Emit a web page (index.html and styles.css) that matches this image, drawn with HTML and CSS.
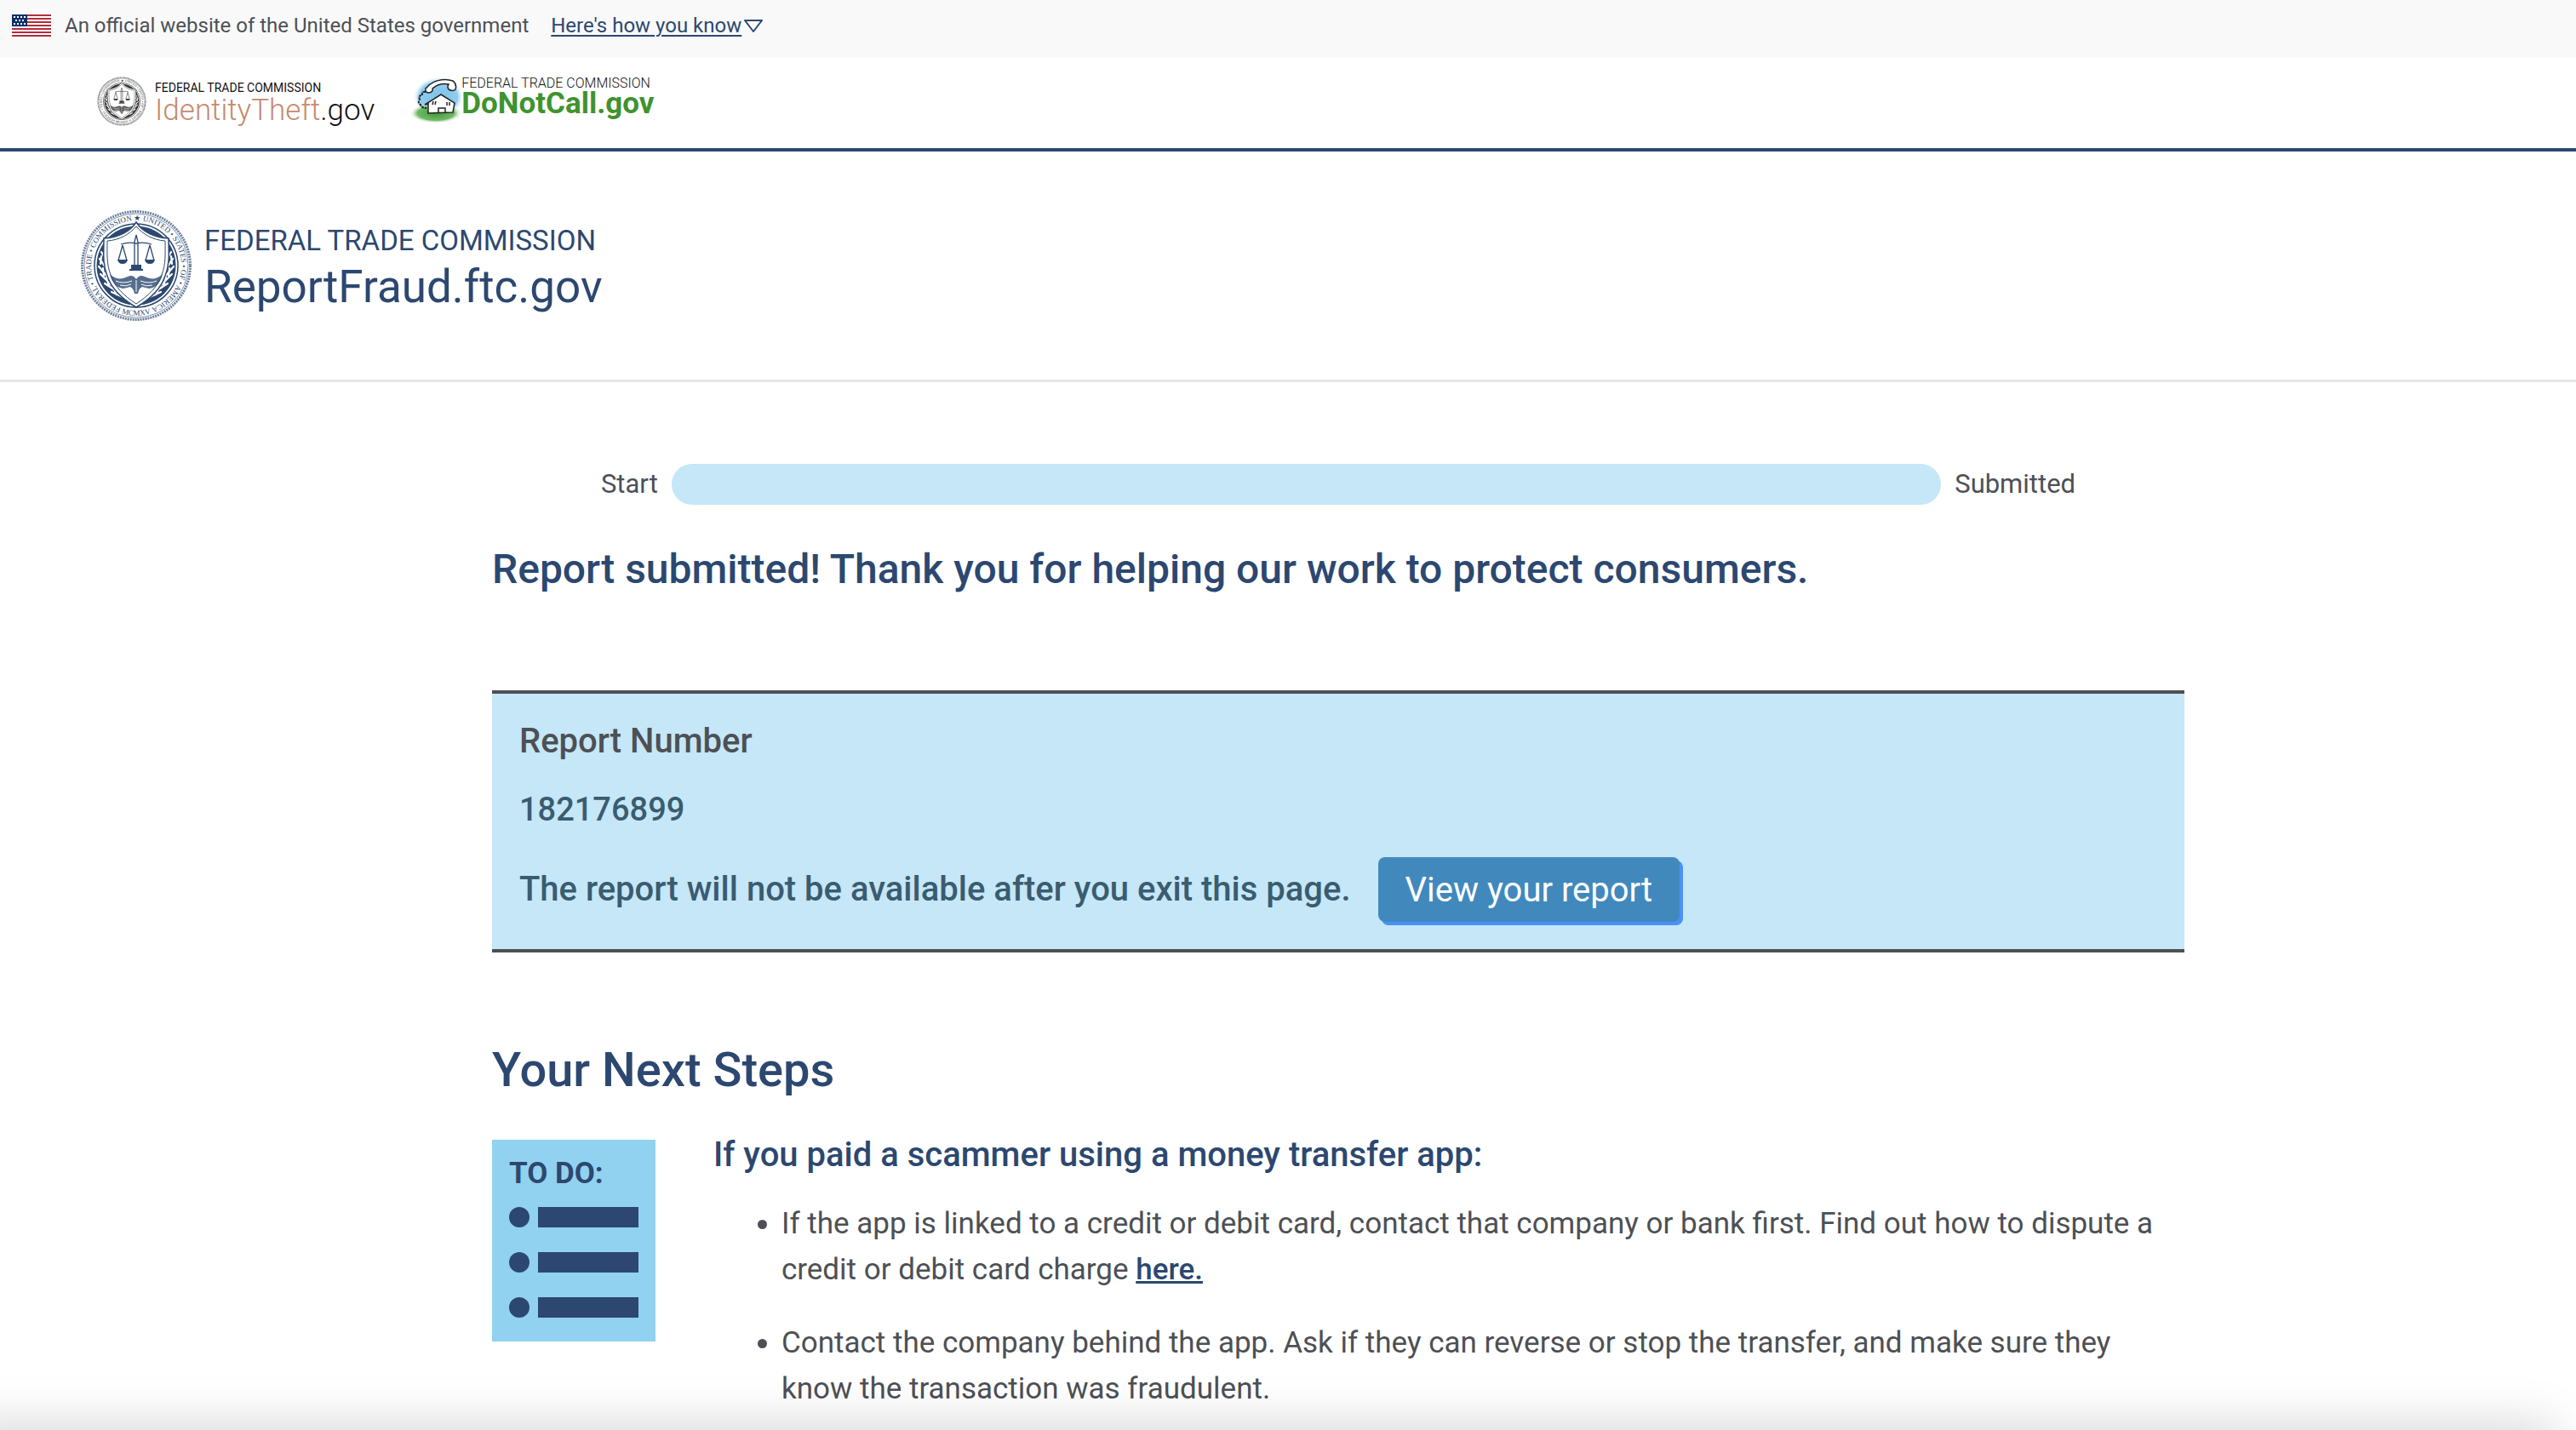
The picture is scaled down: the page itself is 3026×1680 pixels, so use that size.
FILE: index.html
```html
<!DOCTYPE html>
<html lang="en">

<head>
    <meta charset="UTF-8">
    <meta name="viewport" content="width=device-width, initial-scale=1.0">
    <title>ReportFraud.ftc.gov</title>
    <link rel="stylesheet" href="styles.css">
</head>

<body>
    <!-- Shared artwork for the commission seal -->
    <svg class="defs" width="0" height="0" aria-hidden="true">
        <defs>
            <path id="ring" d="M66 119A53 53 0 1 1 66.100 119" fill="none" />
            <path id="ring-bottom" d="M36 116.500A59 59 0 0 0 96 116.500" fill="none" />
            <symbol id="seal" viewBox="0 0 132 132">
                <circle cx="66" cy="66" r="63.500" fill="none" stroke="currentColor" stroke-width="3" stroke-dasharray="2 1" opacity=".7" />
                <circle cx="66" cy="66" r="61" fill="none" stroke="currentColor" stroke-width="1" opacity=".6" />
                <circle cx="66" cy="66" r="49" fill="#fff" stroke="currentColor" stroke-width="1.500" />
                <circle cx="66" cy="66" r="46.500" fill="currentColor" />
                <g fill="none" stroke="#fff" stroke-width="2.200" stroke-linecap="round">
                    <path d="M25 50l7 12M23 58l9 13M22 67l12 14M24 76l13 13M29 87l14 9M37 97l13 6M24 64l1-9M28 78l-1-9M34 90l-3-10M43 100l-5-10" />
                    <path d="M107 50l-7 12M109 58l-9 13M110 67l-12 14M108 76l-13 13M103 87l-14 9M95 97l-13 6M108 64l-1-9M104 78l1-9M98 90l3-10M89 100l5-10" />
                </g>
                <path d="M66 15C59 26 45 33 28 34C28 50 26 63 32 78C37 94 49 105 66 115C83 105 95 94 100 78C106 63 104 50 104 34C87 33 73 26 66 15Z" fill="#fff" stroke="currentColor" stroke-width="1.500" />
                <path d="M66 20C58 29 47 36 32 37C32 52 31 64 36 77C41 91 51 101 66 111C81 101 91 91 96 77C101 64 100 52 100 37C85 36 74 29 66 20Z" fill="none" stroke="currentColor" stroke-width="1" />
                <path d="M64 69V38l2-8 2 8v31M48 41q9-3 18-1q9-2 18 1M50 42l-5 18M50 42l5 18M82 42l-5 18M82 42l5 18" fill="none" stroke="currentColor" stroke-width="1.300" />
                <path d="M44 59h12q-1 5-6 5t-6-5ZM76 59h12q-1 5-6 5t-6-5ZM60 65h12v5h-12Z" fill="currentColor" />
                <path d="M58 70h16v2h-16Z" fill="currentColor" />
                <path d="M35 76Q44 85 56 79Q62 76 66 82Q70 76 76 79Q88 85 97 76Q93 92 81 93L73 91Q69 93 68 99H64Q63 93 59 91L51 93Q39 92 35 76Z" fill="currentColor" opacity=".8" />
                <path d="M42 84q9 4 19 0M47 89q7 2 13-1M90 84q-9 4-19 0M85 89q-7 2-13-1M66 83v14" fill="none" stroke="#fff" stroke-width="1" />
                <text class="ring-text"><textPath href="#ring" startOffset="50%">FEDERAL • TRADE • COMMISSION ★ UNITED • STATES • OF • AMERICA</textPath></text>
                <text class="ring-text"><textPath href="#ring-bottom" startOffset="50%">MCMXV</textPath></text>
            </symbol>
        </defs>
    </svg>

    <!-- Government banner -->
    <div class="banner">
        <svg class="flag" viewBox="0 0 46 26" aria-hidden="true">
            <rect width="46" height="26" fill="#fff" />
            <path d="M0 1h46M0 5h46M0 9h46M0 13h46M0 17h46M0 21h46M0 25h46" stroke="#b22d3a" stroke-width="2" />
            <rect width="18" height="14" fill="#0b3068" />
            <path d="M2 3h15M4 7h12M2 11h15" stroke="#fff" stroke-width="2" stroke-dasharray="2 2" />
        </svg>
        <span class="banner-text">An official website of the United States government</span>
        <a class="banner-link" href="#">Here's how you know</a>
        <svg class="chevron" viewBox="0 0 24 18" aria-hidden="true">
            <path d="M2 3H22L12 16Z" fill="none" stroke="#2c4870" stroke-width="2" stroke-linejoin="round" />
        </svg>
    </div>

    <!-- Sister sites -->
    <nav class="sites">
        <a class="site identity" href="#">
            <svg class="small-seal" viewBox="0 0 132 132" aria-hidden="true"><use href="#seal" /></svg>
            <span class="site-name">
                <span class="site-agency">FEDERAL TRADE COMMISSION</span>
                <span class="site-title"><span class="copper">IdentityTheft</span>.gov</span>
            </span>
        </a>
        <a class="site donotcall" href="#">
            <svg class="house" viewBox="0 0 60 54" aria-hidden="true">
                <defs>
                    <radialGradient id="sky">
                        <stop offset="0" stop-color="#7fc3ea" />
                        <stop offset=".75" stop-color="#8fccf0" />
                        <stop offset="1" stop-color="#fff" stop-opacity="0" />
                    </radialGradient>
                    <radialGradient id="grass">
                        <stop offset="0" stop-color="#3f9a3c" />
                        <stop offset=".7" stop-color="#71b865" />
                        <stop offset="1" stop-color="#fff" stop-opacity="0" />
                    </radialGradient>
                </defs>
                <ellipse cx="33" cy="24" rx="30" ry="24" fill="url(#sky)" />
                <ellipse cx="30" cy="43" rx="31" ry="12" fill="url(#grass)" />
                <path d="M18 14C25 5 39 1 50 5Q55 9 53 15Q50 18 45 15Q43 12 45 9Q34 7 26 14Q27 18 22 19Q17 19 18 14Z" fill="#fff" stroke="#222" stroke-width="1.500" />
                <path d="M18 18q-5-1-4 4q-5 0-3 5q-3 3 1 6q1 4 7 4" fill="none" stroke="#222" stroke-width="2" stroke-dasharray="3 1" />
                <path d="M17 33L36 21L52 31L50 42L21 43L21 32Z" fill="#fff" stroke="#222" stroke-width="1.500" />
                <path d="M27 29l-1 4M30 29l-1 4M43 30v4M46 30v4M33 42v-5h8v5" fill="none" stroke="#222" stroke-width="1.500" />
            </svg>
            <span class="site-name">
                <span class="site-agency">FEDERAL TRADE COMMISSION</span>
                <span class="site-title">DoNotCall.gov</span>
            </span>
        </a>
    </nav>

    <header class="header">
        <a class="brand" href="#">
            <svg class="seal" viewBox="0 0 132 132" aria-hidden="true"><use href="#seal" /></svg>
            <span class="brand-name">
                <span class="brand-agency">FEDERAL TRADE COMMISSION</span>
                <span class="brand-title">ReportFraud.ftc.gov</span>
            </span>
        </a>
    </header>

    <main class="content">
        <div class="progress-row">
            <label for="progress">Start</label>
            <progress id="progress" value="100" max="100"></progress>
            <span>Submitted</span>
        </div>

        <h1>Report submitted! Thank you for helping our work to protect consumers.</h1>

        <section class="report">
            <h2 class="report-label">Report Number</h2>
            <p class="report-number">182176899</p>
            <div class="report-row">
                <p>The report will not be available after you exit this page.</p>
                <button type="button">View your report</button>
            </div>
        </section>

        <h2 class="steps-title">Your Next Steps</h2>
        <section class="steps">
            <div class="todo">
                <div class="todo-title">TO DO:</div>
                <div class="todo-line"></div>
                <div class="todo-line"></div>
                <div class="todo-line"></div>
            </div>
            <div class="advice">
                <h3>If you paid a scammer using a money transfer app:</h3>
                <ul>
                    <li>If the app is linked to a credit or debit card, contact that company or bank first. Find out how to dispute a credit or debit card charge <a href="#">here.</a></li>
                    <li>Contact the company behind the app. Ask if they can reverse or stop the transfer, and make sure they know the transaction was fraudulent.</li>
                </ul>
            </div>
        </section>
    </main>

    <div class="fade"></div>
</body>

</html>
```

FILE: styles.css
```css
* {
    box-sizing: border-box;
}

body {
    margin: 0;
    min-height: 100vh;
    overflow: hidden;
    background: #fff;
    color: #4d5055;
    font-family: Roboto, "Open Sans", sans-serif;
    font-size: 35px;
}

h1,
h2,
h3,
p,
ul {
    margin: 0;
}

a {
    color: #2c4870;
}

.defs {
    display: block;
}

/* Government banner */
.banner {
    display: flex;
    align-items: center;
    height: 68px;
    padding: 0 14px 8px;
    background: #f9f9f9;
    font-size: 24px;
}

.flag {
    width: 46px;
    height: 26px;
    margin-right: 16px;
}

.banner-link {
    margin: 0 2px 0 26px;
    text-decoration-thickness: 2px;
    text-underline-offset: 3px;
}

.chevron {
    width: 24px;
    height: 18px;
}

/* Sister sites */
.sites {
    display: flex;
    gap: 42px;
    height: 110px;
    padding: 22px 114px 0;
    border-bottom: 4px solid #2c4870;
}

.site {
    display: flex;
    align-items: flex-start;
    color: #111;
    text-decoration: none;
}

.site-name,
.brand-name {
    display: flex;
    flex-direction: column;
}

.small-seal {
    width: 58px;
    height: 58px;
    margin-right: 10px;
    color: #333;
}

.identity .site-name {
    padding-top: 4px;
}

.identity .site-agency {
    font-size: 14px;
    line-height: 18px;
}

.identity .site-title {
    font-size: 35px;
    font-weight: 300;
    line-height: 36px;
}

.copper {
    color: #c8896b;
}

.house {
    width: 60px;
    height: 54px;
}

.donotcall .site-agency {
    font-size: 16px;
    font-weight: 300;
    line-height: 16px;
}

.donotcall .site-title {
    color: #3f932f;
    font-size: 35px;
    font-weight: 700;
    line-height: 32px;
}

/* Header */
.header {
    padding: 68px 94px;
    border-bottom: 3px solid #e6e6e6;
}

.brand {
    display: flex;
    align-items: center;
    gap: 14px;
    text-decoration: none;
}

.brand-name {
    padding-top: 6px;
}

.seal {
    width: 132px;
    height: 132px;
    color: #2c4870;
}

.ring-text {
    fill: currentColor;
    font-family: "Liberation Serif", serif;
    font-size: 9px;
    text-anchor: middle;
}

.brand-agency {
    font-size: 33px;
    line-height: 44px;
}

.brand-title {
    font-size: 53px;
    line-height: 64px;
}

/* Report */
.content {
    padding: 96px 15.2% 0 19.1%;
}

.progress-row {
    display: flex;
    align-items: center;
    gap: 16px;
    padding: 0 128px;
    font-size: 31px;
    line-height: 48px;
}

progress {
    flex: 1;
    height: 48px;
    appearance: none;
    border: none;
    border-radius: 24px;
    overflow: hidden;
    background: #c5e7f7;
}

progress::-webkit-progress-bar,
progress::-webkit-progress-value {
    background: #c5e7f7;
}

h1 {
    margin-top: 48px;
    color: #2c4870;
    font-size: 48px;
    font-weight: 500;
    line-height: 56px;
}

.report {
    margin-top: 114px;
    padding: 28px 32px 32px;
    border-top: 4px solid #4d5055;
    border-bottom: 4px solid #4d5055;
    background: #c5e7f7;
    color: #3a5c70;
    font-size: 40px;
    font-weight: 500;
    line-height: 56px;
}

.report-label {
    color: #4d5055;
    font-size: 40px;
    font-weight: 500;
}

.report-number {
    margin-top: 24px;
    font-size: 38px;
}

.report-row {
    display: flex;
    align-items: center;
    gap: 32px;
    margin-top: 28px;
}

button {
    height: 76px;
    padding: 0 32px;
    border: none;
    border-radius: 8px;
    box-shadow: 4px 4px #4a90f7;
    background: #4189bd;
    color: #fff;
    font-family: inherit;
    font-size: 40px;
    cursor: pointer;
}

/* Next steps */
.steps-title {
    margin-top: 104px;
    color: #2c4870;
    font-size: 56px;
    font-weight: 500;
    line-height: 68px;
}

.steps {
    display: flex;
    align-items: flex-start;
    gap: 68px;
    margin-top: 48px;
}

.todo {
    flex: none;
    width: 192px;
    height: 237px;
    padding: 22px 20px;
    background: #91d2f0;
    color: #2c4870;
}

.todo-title {
    margin-bottom: 21px;
    font-size: 35px;
    font-weight: 700;
    line-height: 36px;
}

.todo-line {
    display: flex;
    gap: 10px;
    height: 24px;
    margin-bottom: 29px;
}

.todo-line::before {
    content: "";
    width: 24px;
    border-radius: 50%;
    background: #2c4870;
}

.todo-line::after {
    content: "";
    flex: 1;
    background: #2c4870;
}

.advice {
    flex: 1;
}

h3 {
    color: #2c4870;
    font-size: 40px;
    font-weight: 500;
    line-height: 36px;
}

ul {
    margin-top: 36px;
    padding-left: 80px;
    line-height: 54px;
}

li {
    margin-bottom: 32px;
}

li a {
    font-weight: 500;
    text-decoration-thickness: 3px;
}

/* Shade along the bottom edge of the window */
.fade {
    position: fixed;
    right: 24px;
    bottom: -60px;
    left: -60px;
    height: 60px;
    box-shadow: 0 0 64px rgba(0, 0, 0, 0.2);
}
```
